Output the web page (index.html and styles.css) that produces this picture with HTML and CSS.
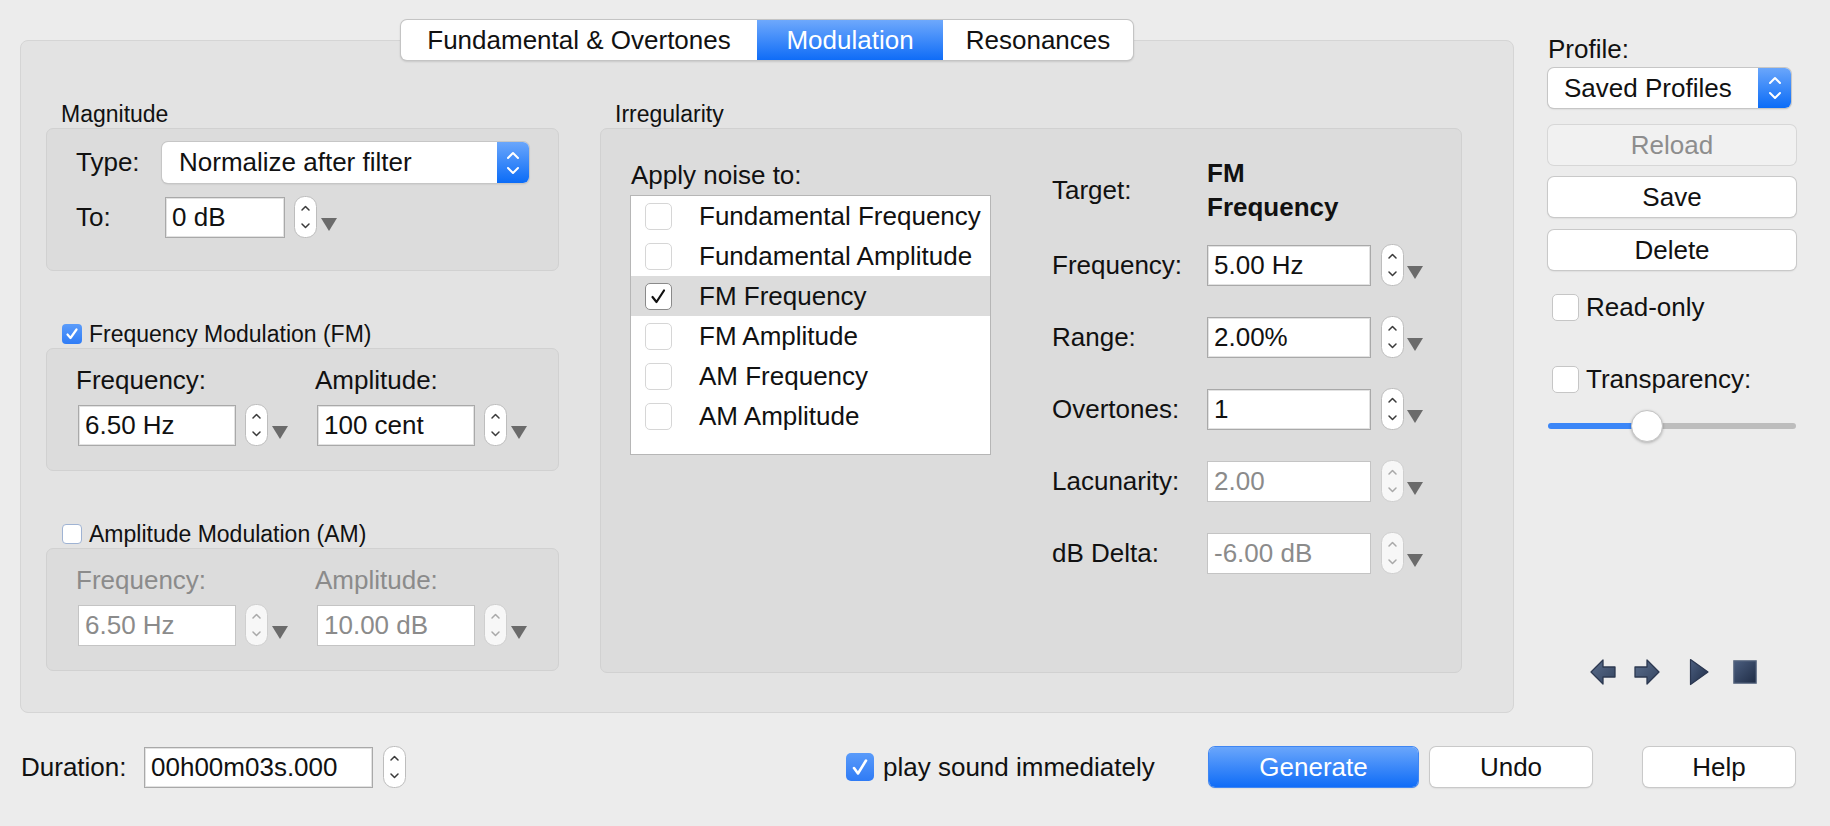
FILE: index.html
```html
<!DOCTYPE html>
<html>
<head>
<meta charset="utf-8">
<title>Modulation</title>
<link rel="stylesheet" href="styles.css">
</head>
<body>
<div class="window">
  <div class="main">
    <div class="tabs">
      <div class="tab tab-fund">Fundamental &amp; Overtones</div>
      <div class="tab tab-mod active">Modulation</div>
      <div class="tab tab-res">Resonances</div>
    </div>
    <div class="panel">
      <div class="leftcol">
        <div class="glabel">Magnitude</div>
        <div class="box mag-box">
          <div class="mrow">
            <span class="mlabel">Type:</span>
            <div class="popup mag-popup">
              <span class="popup-text">Normalize after filter</span>
              <span class="popup-btn"><svg width="14" height="26" viewBox="0 0 14 26"><path d="M2 8 L7 3 L12 8 M2 18 L7 23 L12 18" fill="none" stroke="#fff" stroke-width="2" stroke-linecap="round" stroke-linejoin="round"/></svg></span>
            </div>
          </div>
          <div class="mrow mrow2">
            <span class="mlabel">To:</span>
            <div class="spin spin-to">
              <div class="field w-to">0 dB</div>
              <svg class="stepper" width="23" height="42" viewBox="0 0 23 42"><rect x="0.5" y="0.5" width="22" height="41" rx="10" fill="#fff" stroke="#bdbdbd"/><path d="M8 14 L11.5 10.5 L15 14 M8 28 L11.5 31.5 L15 28" fill="none" stroke="#3a3a3a" stroke-width="1.5" stroke-linecap="round" stroke-linejoin="round"/></svg>
              <span class="tri"></span>
            </div>
          </div>
        </div>

        <div class="ghead"><span class="gcb gcb-on"><svg width="20" height="20" viewBox="0 0 20 20"><path d="M5.5 10.5 L8.5 14 L14.5 5.5" fill="none" stroke="#fff" stroke-width="2.2" stroke-linecap="round" stroke-linejoin="round"/></svg></span>Frequency Modulation (FM)</div>
        <div class="box mod-box">
          <div class="mcol">
            <div class="flabel">Frequency:</div>
            <div class="spin">
              <div class="field w-mod">6.50 Hz</div>
              <svg class="stepper" width="23" height="42" viewBox="0 0 23 42"><rect x="0.5" y="0.5" width="22" height="41" rx="10" fill="#fff" stroke="#bdbdbd"/><path d="M8 14 L11.5 10.5 L15 14 M8 28 L11.5 31.5 L15 28" fill="none" stroke="#3a3a3a" stroke-width="1.5" stroke-linecap="round" stroke-linejoin="round"/></svg>
              <span class="tri"></span>
            </div>
          </div>
          <div class="mcol">
            <div class="flabel">Amplitude:</div>
            <div class="spin">
              <div class="field w-mod">100 cent</div>
              <svg class="stepper" width="23" height="42" viewBox="0 0 23 42"><rect x="0.5" y="0.5" width="22" height="41" rx="10" fill="#fff" stroke="#bdbdbd"/><path d="M8 14 L11.5 10.5 L15 14 M8 28 L11.5 31.5 L15 28" fill="none" stroke="#3a3a3a" stroke-width="1.5" stroke-linecap="round" stroke-linejoin="round"/></svg>
              <span class="tri"></span>
            </div>
          </div>
        </div>

        <div class="ghead"><span class="gcb gcb-off"></span>Amplitude Modulation (AM)</div>
        <div class="box mod-box disabled">
          <div class="mcol">
            <div class="flabel">Frequency:</div>
            <div class="spin">
              <div class="field w-mod">6.50 Hz</div>
              <svg class="stepper" width="23" height="42" viewBox="0 0 23 42"><rect x="0.5" y="0.5" width="22" height="41" rx="10" fill="#f7f7f7" stroke="#cfcfcf"/><path d="M8 14 L11.5 10.5 L15 14 M8 28 L11.5 31.5 L15 28" fill="none" stroke="#a9a9a9" stroke-width="1.5" stroke-linecap="round" stroke-linejoin="round"/></svg>
              <span class="tri"></span>
            </div>
          </div>
          <div class="mcol">
            <div class="flabel">Amplitude:</div>
            <div class="spin">
              <div class="field w-mod">10.00 dB</div>
              <svg class="stepper" width="23" height="42" viewBox="0 0 23 42"><rect x="0.5" y="0.5" width="22" height="41" rx="10" fill="#f7f7f7" stroke="#cfcfcf"/><path d="M8 14 L11.5 10.5 L15 14 M8 28 L11.5 31.5 L15 28" fill="none" stroke="#a9a9a9" stroke-width="1.5" stroke-linecap="round" stroke-linejoin="round"/></svg>
              <span class="tri"></span>
            </div>
          </div>
        </div>
      </div>

      <div class="irrcol">
        <div class="glabel">Irregularity</div>
        <div class="box irr-box">
          <div class="noise">
            <div class="noise-label">Apply noise to:</div>
            <div class="list">
              <div class="lrow"><span class="lcb"></span>Fundamental Frequency</div>
              <div class="lrow"><span class="lcb"></span>Fundamental Amplitude</div>
              <div class="lrow sel"><span class="lcb lcb-on"><svg width="25" height="25" viewBox="0 0 25 25"><path d="M6.5 13 L10.5 18 L18 6.5" fill="none" stroke="#111" stroke-width="2.2" stroke-linecap="round" stroke-linejoin="round"/></svg></span>FM Frequency</div>
              <div class="lrow"><span class="lcb"></span>FM Amplitude</div>
              <div class="lrow"><span class="lcb"></span>AM Frequency</div>
              <div class="lrow"><span class="lcb"></span>AM Amplitude</div>
            </div>
          </div>
          <div class="params">
            <div class="prow prow-target">
              <span class="plabel">Target:</span>
              <span class="target-val">FM<br>Frequency</span>
            </div>
            <div class="prow">
              <span class="plabel">Frequency:</span>
              <div class="spin">
                <div class="field w-par">5.00 Hz</div>
                <svg class="stepper" width="23" height="42" viewBox="0 0 23 42"><rect x="0.5" y="0.5" width="22" height="41" rx="10" fill="#fff" stroke="#bdbdbd"/><path d="M8 14 L11.5 10.5 L15 14 M8 28 L11.5 31.5 L15 28" fill="none" stroke="#3a3a3a" stroke-width="1.5" stroke-linecap="round" stroke-linejoin="round"/></svg>
                <span class="tri"></span>
              </div>
            </div>
            <div class="prow">
              <span class="plabel">Range:</span>
              <div class="spin">
                <div class="field w-par">2.00%</div>
                <svg class="stepper" width="23" height="42" viewBox="0 0 23 42"><rect x="0.5" y="0.5" width="22" height="41" rx="10" fill="#fff" stroke="#bdbdbd"/><path d="M8 14 L11.5 10.5 L15 14 M8 28 L11.5 31.5 L15 28" fill="none" stroke="#3a3a3a" stroke-width="1.5" stroke-linecap="round" stroke-linejoin="round"/></svg>
                <span class="tri"></span>
              </div>
            </div>
            <div class="prow">
              <span class="plabel">Overtones:</span>
              <div class="spin">
                <div class="field w-par">1</div>
                <svg class="stepper" width="23" height="42" viewBox="0 0 23 42"><rect x="0.5" y="0.5" width="22" height="41" rx="10" fill="#fff" stroke="#bdbdbd"/><path d="M8 14 L11.5 10.5 L15 14 M8 28 L11.5 31.5 L15 28" fill="none" stroke="#3a3a3a" stroke-width="1.5" stroke-linecap="round" stroke-linejoin="round"/></svg>
                <span class="tri"></span>
              </div>
            </div>
            <div class="prow disabled">
              <span class="plabel">Lacunarity:</span>
              <div class="spin">
                <div class="field w-par">2.00</div>
                <svg class="stepper" width="23" height="42" viewBox="0 0 23 42"><rect x="0.5" y="0.5" width="22" height="41" rx="10" fill="#f7f7f7" stroke="#cfcfcf"/><path d="M8 14 L11.5 10.5 L15 14 M8 28 L11.5 31.5 L15 28" fill="none" stroke="#a9a9a9" stroke-width="1.5" stroke-linecap="round" stroke-linejoin="round"/></svg>
                <span class="tri"></span>
              </div>
            </div>
            <div class="prow disabled">
              <span class="plabel">dB Delta:</span>
              <div class="spin">
                <div class="field w-par">-6.00 dB</div>
                <svg class="stepper" width="23" height="42" viewBox="0 0 23 42"><rect x="0.5" y="0.5" width="22" height="41" rx="10" fill="#f7f7f7" stroke="#cfcfcf"/><path d="M8 14 L11.5 10.5 L15 14 M8 28 L11.5 31.5 L15 28" fill="none" stroke="#a9a9a9" stroke-width="1.5" stroke-linecap="round" stroke-linejoin="round"/></svg>
                <span class="tri"></span>
              </div>
            </div>
          </div>
        </div>
      </div>
    </div>
  </div>

  <div class="side">
    <div class="side-label">Profile:</div>
    <div class="popup prof-popup">
      <span class="popup-text">Saved Profiles</span>
      <span class="popup-btn"><svg width="14" height="26" viewBox="0 0 14 26"><path d="M2 8 L7 3 L12 8 M2 18 L7 23 L12 18" fill="none" stroke="#fff" stroke-width="2" stroke-linecap="round" stroke-linejoin="round"/></svg></span>
    </div>
    <div class="btn side-btn btn-disabled reload">Reload</div>
    <div class="btn side-btn save">Save</div>
    <div class="btn side-btn delete">Delete</div>
    <div class="scheck ro"><span class="scb"></span>Read-only</div>
    <div class="scheck tr"><span class="scb"></span>Transparency:</div>
    <div class="slider">
      <div class="track"></div>
      <div class="thumb"></div>
    </div>
    <div class="icons">
      <svg class="ic ic-left" width="26" height="28" viewBox="0 0 26 28"><defs><linearGradient id="g1" x1="0" y1="0" x2="1" y2="1"><stop offset="0" stop-color="#5a6d8c"/><stop offset="1" stop-color="#34445f"/></linearGradient></defs><polygon points="1,14 13,2 13,9 25,9 25,19 13,19 13,26" fill="url(#g1)" stroke="#2c3850" stroke-width="1.3" stroke-linejoin="round"/></svg>
      <svg class="ic ic-right" width="26" height="28" viewBox="0 0 26 28"><defs><linearGradient id="g2" x1="0" y1="0" x2="1" y2="1"><stop offset="0" stop-color="#5a6d8c"/><stop offset="1" stop-color="#34445f"/></linearGradient></defs><polygon points="25,14 13,2 13,9 1,9 1,19 13,19 13,26" fill="url(#g2)" stroke="#2c3850" stroke-width="1.3" stroke-linejoin="round"/></svg>
      <svg class="ic ic-play" width="20" height="28" viewBox="0 0 20 28"><defs><linearGradient id="g3" x1="0" y1="0" x2="1" y2="1"><stop offset="0" stop-color="#4c5f80"/><stop offset="1" stop-color="#1f2d47"/></linearGradient></defs><polygon points="1.5,1.5 19,14 1.5,26.5" fill="url(#g3)" stroke="#2a3650" stroke-width="1.2" stroke-linejoin="round"/></svg>
      <svg class="ic ic-stop" width="24" height="24" viewBox="0 0 24 24"><defs><linearGradient id="g4" x1="0" y1="0" x2="1" y2="1"><stop offset="0" stop-color="#4b5e7f"/><stop offset="1" stop-color="#1f2c45"/></linearGradient></defs><rect x="0.8" y="0.8" width="22.4" height="22.4" fill="url(#g4)" stroke="#5b6a82" stroke-width="1.2"/></svg>
    </div>
  </div>

  <div class="bottom">
    <span class="dur-label">Duration:</span>
    <div class="field w-dur">00h00m03s.000</div>
    <svg class="stepper dur-step" width="23" height="42" viewBox="0 0 23 42"><rect x="0.5" y="0.5" width="22" height="41" rx="10" fill="#fff" stroke="#bdbdbd"/><path d="M8 14 L11.5 10.5 L15 14 M8 28 L11.5 31.5 L15 28" fill="none" stroke="#3a3a3a" stroke-width="1.5" stroke-linecap="round" stroke-linejoin="round"/></svg>
    <span class="bcb"><svg width="28" height="28" viewBox="0 0 28 28"><path d="M8 15 L12 20.5 L20 7.5" fill="none" stroke="#fff" stroke-width="2.6" stroke-linecap="round" stroke-linejoin="round"/></svg></span>
    <span class="play-label">play sound immediately</span>
    <div class="btn btn-primary gen">Generate</div>
    <div class="btn undo">Undo</div>
    <div class="btn help">Help</div>
  </div>
</div>
</body>
</html>
```
FILE: styles.css
```css
html, body {
  margin: 0;
  padding: 0;
}
body {
  width: 1830px;
  height: 826px;
  overflow: hidden;
  background: #ececec;
  font-family: "Liberation Sans", Arial, sans-serif;
  font-size: 26px;
  color: #111;
}

.window {
  display: grid;
  grid-template-columns: 1494px 248px;
  column-gap: 34px;
  padding: 20px 0 0 20px;
}

/* ---------- main tab panel ---------- */
.main {
  display: flex;
  flex-direction: column;
}
.tabs {
  align-self: center;
  display: flex;
  height: 40px;
  margin-bottom: -20px;
  position: relative;
  z-index: 1;
  background: #fff;
  border-radius: 6px;
  overflow: hidden;
  box-shadow: 0 0 0 1px #c4c4c4, 0 1px 2px 1px rgba(0, 0, 0, 0.12);
}
.tab {
  display: flex;
  align-items: center;
  justify-content: center;
  height: 40px;
}
.tab-fund { width: 356px; }
.tab-mod { width: 186px; }
.tab-res { width: 190px; }
.tab.active {
  background: linear-gradient(#6ea8fc, #0f6cf7);
  color: #fff;
}

.panel {
  height: 673px;
  box-sizing: border-box;
  background: #e3e3e3;
  border: 1px solid #d5d5d5;
  border-radius: 8px;
  display: grid;
  grid-template-columns: 513px 862px;
  column-gap: 41px;
  align-items: start;
  padding: 59px 0 0 25px;
}

.glabel {
  font-size: 23px;
  height: 28px;
  line-height: 28px;
  padding-left: 15px;
}
.box {
  background: #dcdcdc;
  border: 1px solid #d1d1d1;
  border-radius: 7px;
  box-sizing: border-box;
}

/* magnitude */
.mag-box {
  height: 143px;
  padding: 13px 0 0 29px;
}
.mrow {
  display: flex;
  align-items: center;
}
.mrow2 {
  margin-top: 13px;
}
.mlabel {
  width: 86px;
}
.spin-to {
  margin-left: 3px;
}

.popup {
  display: flex;
  height: 41px;
  border-radius: 6px;
  background: #fff;
  overflow: hidden;
  box-shadow: 0 0 0 1px #c6c6c6, 0 1px 2px rgba(0, 0, 0, 0.18);
}
.popup-text {
  flex: 1;
  line-height: 41px;
  padding-left: 17px;
}
.popup-btn {
  width: 32px;
  display: flex;
  align-items: center;
  justify-content: center;
  background: linear-gradient(#6aa6fb, #0b6cf7);
}
.mag-popup {
  width: 367px;
}

/* spin fields */
.spin {
  display: flex;
  align-items: center;
}
.field {
  height: 41px;
  line-height: 39px;
  box-sizing: border-box;
  background: #fff;
  border: 1px solid #a9a9a9;
  box-shadow: inset 0 0 0 1px #e2e2e2;
  padding-left: 6px;
  white-space: nowrap;
}
.w-to { width: 120px; }
.w-mod { width: 158px; }
.w-par { width: 164px; }
.w-dur { width: 229px; }
.stepper {
  display: block;
  margin-left: 9px;
  flex: none;
}
.tri {
  width: 0;
  height: 0;
  border-left: 8px solid transparent;
  border-right: 8px solid transparent;
  border-top: 13px solid #6b6b6b;
  margin-left: 4px;
  align-self: flex-end;
  margin-bottom: 7px;
}

/* group headers with checkbox */
.ghead {
  display: flex;
  align-items: center;
  height: 28px;
  margin-top: 49px;
  padding-left: 16px;
  font-size: 23px;
}
.gcb {
  width: 20px;
  height: 20px;
  border-radius: 4px;
  box-sizing: border-box;
  margin-right: 7px;
  display: flex;
}
.gcb-on {
  background: linear-gradient(#5b9cfa, #2f7cf6);
}
.gcb-off {
  background: #fff;
  border: 1px solid #9fb3d3;
}

.mod-box {
  height: 123px;
  display: grid;
  grid-template-columns: 239px auto;
  padding: 16px 0 0 29px;
}
.flabel {
  line-height: 30px;
  height: 30px;
  margin-bottom: 9px;
}
.mcol .spin {
  margin-left: 2px;
}
.disabled .flabel,
.disabled .field,
.disabled .plabel-dis {
  color: #8b8b8b;
}
.disabled .field {
  border-color: #c4c4c4;
  box-shadow: none;
}

/* irregularity */
.irr-box {
  height: 545px;
  display: flex;
  align-items: flex-start;
  padding: 31px 0 0 30px;
}
.noise {
  width: 361px;
}
.noise-label {
  line-height: 30px;
  height: 30px;
  margin-bottom: 5px;
}
.list {
  width: 361px;
  height: 260px;
  box-sizing: border-box;
  background: #fff;
  border: 1px solid #b6b6b6;
  margin-left: -1px;
}
.lrow {
  height: 40px;
  display: flex;
  align-items: center;
  padding-left: 14px;
}
.lrow.sel {
  background: #dcdcdc;
}
.lcb {
  width: 27px;
  height: 27px;
  box-sizing: border-box;
  border: 1px solid #d6d6d6;
  border-radius: 5px;
  background: #fff;
  margin-right: 27px;
  display: flex;
  align-items: center;
  justify-content: center;
}
.lcb-on {
  border-color: #8a8a8a;
}

.params {
  margin-left: 60px;
  margin-top: -4px;
  display: flex;
  flex-direction: column;
}
.prow {
  display: flex;
  align-items: center;
  height: 42px;
  margin-top: 30px;
}
.prow-target {
  height: 68px;
  margin-top: 0;
}
.prow-target + .prow {
  margin-top: 20px;
}
.plabel {
  width: 155px;
}
.target-val {
  font-weight: bold;
  line-height: 34px;
}
.prow .stepper {
  margin-left: 10px;
}
.prow .tri {
  margin-left: 3px;
}

/* ---------- sidebar ---------- */
.side {
  display: flex;
  flex-direction: column;
  padding-top: 15px;
}
.side-label {
  line-height: 28px;
  height: 28px;
}
.prof-popup {
  margin-top: 5px;
  width: 243px;
  height: 40px;
}
.prof-popup .popup-text {
  line-height: 40px;
  padding-left: 16px;
}
.prof-popup .popup-btn {
  width: 33px;
}
.btn {
  height: 40px;
  box-sizing: border-box;
  display: flex;
  align-items: center;
  justify-content: center;
  background: #fff;
  border-radius: 6px;
  box-shadow: 0 0 0 1px #c9c9c9, 0 1px 2px rgba(0, 0, 0, 0.18);
}
.btn-disabled {
  background: #f1f1f1;
  color: #8d8d8d;
  box-shadow: 0 0 0 1px #d7d7d7;
}
.side-btn {
  width: 248px;
}
.reload { margin-top: 17px; }
.save { margin-top: 12px; }
.delete { margin-top: 13px; }

.scheck {
  display: flex;
  align-items: center;
  height: 27px;
  padding-left: 4px;
}
.ro { margin-top: 24px; }
.tr { margin-top: 45px; }
.scb {
  width: 27px;
  height: 27px;
  box-sizing: border-box;
  border: 1px solid #c6c6c6;
  border-radius: 5px;
  background: #fff;
  margin-right: 7px;
}

.slider {
  position: relative;
  height: 34px;
  margin-top: 16px;
}
.track {
  height: 6px;
  margin-top: 14px;
  border-radius: 3px;
  background: linear-gradient(to right, #3b86f7 0, #3b86f7 40%, #bdbdbd 40%, #bdbdbd 100%);
}
.thumb {
  position: absolute;
  left: 83px;
  top: 1px;
  width: 32px;
  height: 32px;
  box-sizing: border-box;
  border-radius: 50%;
  background: #fff;
  border: 1px solid #c4c4c4;
  box-shadow: 0 1px 3px rgba(0, 0, 0, 0.25);
}

.icons {
  display: flex;
  align-items: center;
  margin-top: 215px;
  padding-left: 42px;
}
.ic { display: block; }
.ic-right { margin-left: 18px; }
.ic-play { margin-left: 29px; }
.ic-stop { margin-left: 24px; }

/* ---------- bottom row ---------- */
.bottom {
  grid-column: 1 / -1;
  display: flex;
  align-items: center;
  height: 42px;
  margin-top: 33px;
}
.dur-label {
  width: 123px;
  margin-left: 1px;
}
.dur-step {
  margin-left: 10px;
}
.bcb {
  width: 28px;
  height: 28px;
  border-radius: 5px;
  background: linear-gradient(#5a9bfa, #2f7bf5);
  margin-left: 440px;
  display: flex;
}
.play-label {
  width: 326px;
  margin-left: 9px;
}
.btn-primary {
  background: linear-gradient(#6aa6fb, #0f6cf7);
  color: #fff;
  box-shadow: 0 0 0 1px #3f86f3, 0 1px 2px rgba(0, 0, 0, 0.18);
}
.gen { width: 209px; }
.undo { width: 162px; margin-left: 12px; }
.help { width: 152px; margin-left: 51px; }
```
